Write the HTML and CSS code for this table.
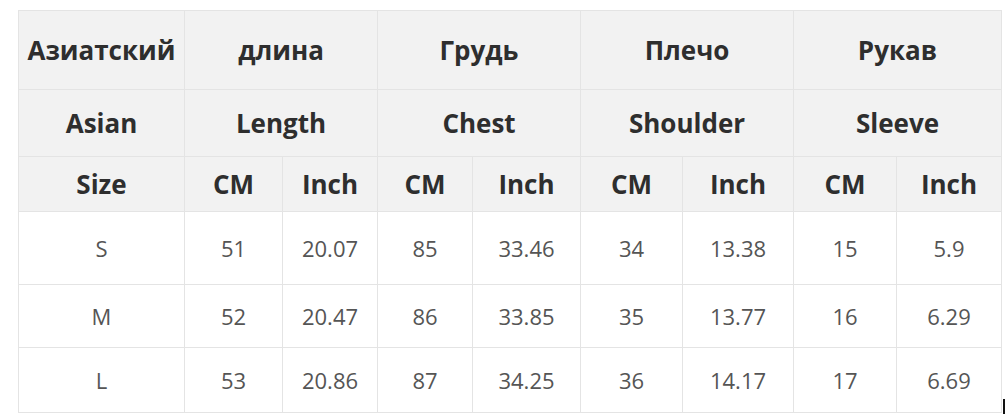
FILE: index.html
```html
<!DOCTYPE html>
<html>
<head>
<meta charset="utf-8">
<link rel="stylesheet" href="styles.css">
</head>
<body>
<div class="page">
  <table class="size-table">
    <colgroup>
      <col class="c-size">
      <col class="c-len-cm"><col class="c-len-in">
      <col class="c-ch-cm"><col class="c-ch-in">
      <col class="c-sh-cm"><col class="c-sh-in">
      <col class="c-sl-cm"><col class="c-sl-in">
    </colgroup>
    <thead>
      <tr class="r-ru">
        <th>Азиатский</th>
        <th colspan="2">длина</th>
        <th colspan="2">Грудь</th>
        <th colspan="2">Плечо</th>
        <th colspan="2">Рукав</th>
      </tr>
      <tr class="r-en">
        <th>Asian</th>
        <th colspan="2">Length</th>
        <th colspan="2">Chest</th>
        <th colspan="2">Shoulder</th>
        <th colspan="2">Sleeve</th>
      </tr>
      <tr class="r-unit">
        <th>Size</th>
        <th>CM</th><th>Inch</th>
        <th>CM</th><th>Inch</th>
        <th>CM</th><th>Inch</th>
        <th>CM</th><th>Inch</th>
      </tr>
    </thead>
    <tbody>
      <tr class="r-s">
        <td>S</td><td>51</td><td>20.07</td><td>85</td><td>33.46</td><td>34</td><td>13.38</td><td>15</td><td>5.9</td>
      </tr>
      <tr class="r-m">
        <td>M</td><td>52</td><td>20.47</td><td>86</td><td>33.85</td><td>35</td><td>13.77</td><td>16</td><td>6.29</td>
      </tr>
      <tr class="r-l">
        <td>L</td><td>53</td><td>20.86</td><td>87</td><td>34.25</td><td>36</td><td>14.17</td><td>17</td><td>6.69</td>
      </tr>
    </tbody>
  </table>
  <div class="cursor-mark"></div>
</div>
</body>
</html>
```

FILE: styles.css
```css
html, body {
  margin: 0;
  padding: 0;
  background: #ffffff;
}

.page {
  display: flex;
  align-items: flex-start;
  height: 414px;
  box-sizing: border-box;
  padding: 10px 0 0 18px;
  overflow: hidden;
}

.size-table {
  border-collapse: collapse;
  table-layout: fixed;
  width: 983px;
  font-family: "Open Sans", "Liberation Sans", sans-serif;
}

.c-size { width: 166px; }
.c-len-cm { width: 98px; }
.c-len-in { width: 95px; }
.c-ch-cm { width: 95px; }
.c-ch-in { width: 108px; }
.c-sh-cm { width: 102px; }
.c-sh-in { width: 111px; }
.c-sl-cm { width: 103px; }
.c-sl-in { width: 105px; }

.size-table th,
.size-table td {
  border: 1px solid #e4e4e4;
  text-align: center;
  vertical-align: middle;
  padding: 0;
  white-space: nowrap;
}

.size-table th {
  background: #f2f2f2;
  color: #2e2e2e;
  font-weight: 700;
  font-size: 26px;
}

.size-table td {
  background: #ffffff;
  color: #555555;
  font-weight: 400;
  font-size: 22px;
}

.r-ru { height: 79px; }
.r-en { height: 67px; }
.r-unit { height: 55px; }
.r-s { height: 73px; }
.r-m { height: 63px; }
.r-l { height: 65px; }

.cursor-mark {
  align-self: flex-end;
  width: 2px;
  height: 15px;
  margin-left: 1px;
  background: #111111;
}
```
